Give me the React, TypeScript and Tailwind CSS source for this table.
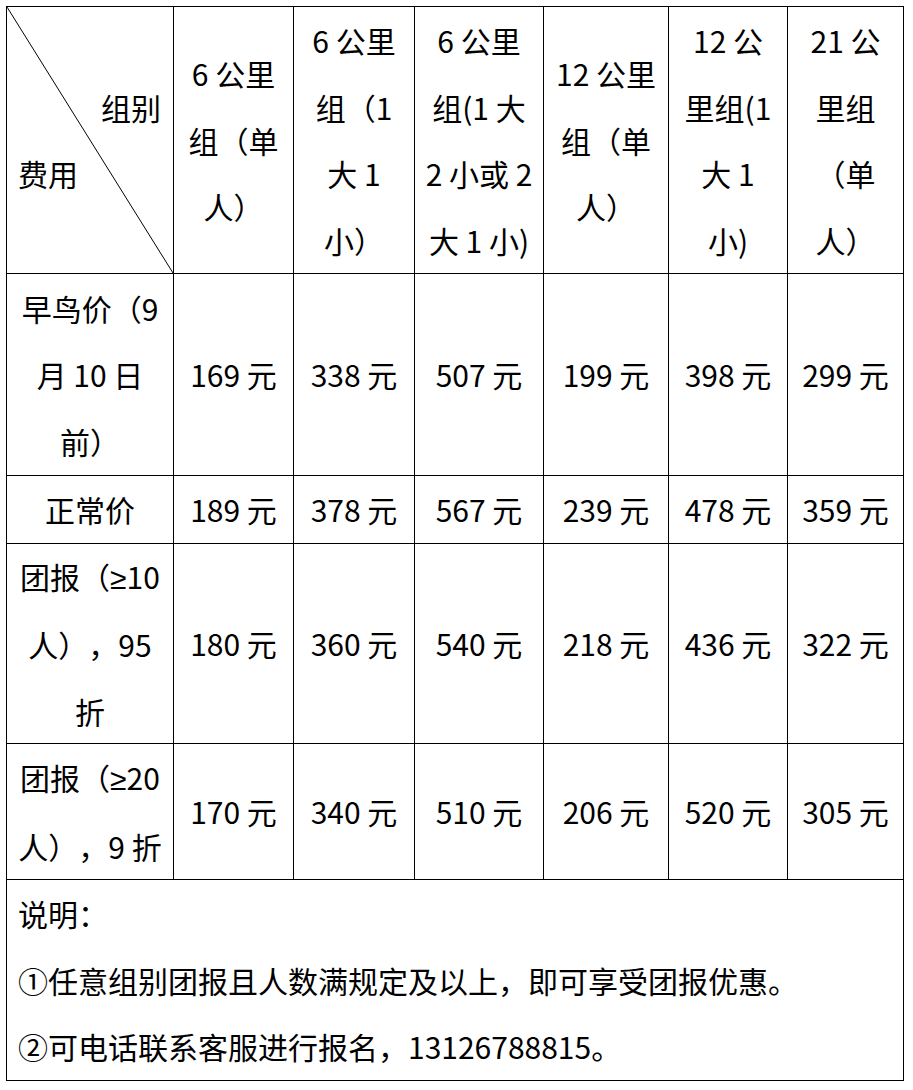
import React from "react";

const font = { fontFamily: '"Noto Sans CJK SC", "Noto Sans", sans-serif' };

function Line({ text }: { text: string }) {
  const parts = text.split("≥");
  return (
    <div className="leading-[66.5px] whitespace-pre">
      {parts.map((p, i) => (
        <React.Fragment key={i}>
          {i > 0 && <span className="font-['Noto_Sans',sans-serif]">≥</span>}
          {p}
        </React.Fragment>
      ))}
    </div>
  );
}

function Cell({ lines, className = "" }: { lines: string[]; className?: string }) {
  return (
    <div className={`bg-white flex flex-col items-center justify-center text-center ${className}`}>
      {lines.map((l, i) => (
        <Line key={i} text={l} />
      ))}
    </div>
  );
}

const headers: string[][] = [
  ["6 公里", "组（单", "人）"],
  ["6 公里", "组（1", "大 1", "小）"],
  ["6 公里", "组(1 大", "2 小或 2", "大 1 小)"],
  ["12 公里", "组（单", "人）"],
  ["12 公", "里组(1", "大 1", "小)"],
  ["21 公", "里组", "（单", "人）"],
];

const rows: { label: string[]; values: string[]; h: string }[] = [
  {
    label: ["早鸟价（9", "月 10 日", "前）"],
    values: ["169 元", "338 元", "507 元", "199 元", "398 元", "299 元"],
    h: "h-[201px]",
  },
  {
    label: ["正常价"],
    values: ["189 元", "378 元", "567 元", "239 元", "478 元", "359 元"],
    h: "h-[67px]",
  },
  {
    label: ["团报（≥10", "人），95", "折"],
    values: ["180 元", "360 元", "540 元", "218 元", "436 元", "322 元"],
    h: "h-[199px]",
  },
  {
    label: ["团报（≥20", "人），9 折"],
    values: ["170 元", "340 元", "510 元", "206 元", "520 元", "305 元"],
    h: "h-[135px]",
  },
];

export default function App() {
  return (
    <div
      className="w-[913px] h-[1090px] bg-white text-black text-[30px] [text-spacing-trim:space-all]"
      style={font}
    >
      <div className="pt-[6px] pl-[6px]">
        <div className="w-[898px] bg-black p-px grid grid-cols-[166px_119px_120px_128px_124px_118px_115px] gap-px">
          {/* header row */}
          <div className="relative bg-white h-[266px] flex flex-col justify-center">
            <svg
              className="absolute inset-0"
              width="166"
              height="266"
              viewBox="0 0 166 266"
            >
              <line x1="0" y1="0" x2="166" y2="266" stroke="#000" strokeWidth="1" />
            </svg>
            <div className="leading-[66.5px]">&nbsp;</div>
            <div className="leading-[66.5px] text-right pr-[12px]">组别</div>
            <div className="leading-[66.5px] text-left pl-[11px]">费用</div>
            <div className="leading-[66.5px]">&nbsp;</div>
          </div>
          {headers.map((h, i) => (
            <Cell key={i} lines={h} className="h-[266px]" />
          ))}

          {rows.map((r, ri) => (
            <React.Fragment key={ri}>
              <Cell lines={r.label} className={r.h} />
              {r.values.map((v, vi) => (
                <Cell key={vi} lines={[v]} className={r.h} />
              ))}
            </React.Fragment>
          ))}

          <div className="col-span-7 bg-white h-[200px] pl-[11px] flex flex-col justify-center">
            <div className="leading-[66.5px]">说明：</div>
            <div className="leading-[66.5px]">①任意组别团报且人数满规定及以上，即可享受团报优惠。</div>
            <div className="leading-[66.5px]">②可电话联系客服进行报名，13126788815。</div>
          </div>
        </div>
      </div>
    </div>
  );
}
